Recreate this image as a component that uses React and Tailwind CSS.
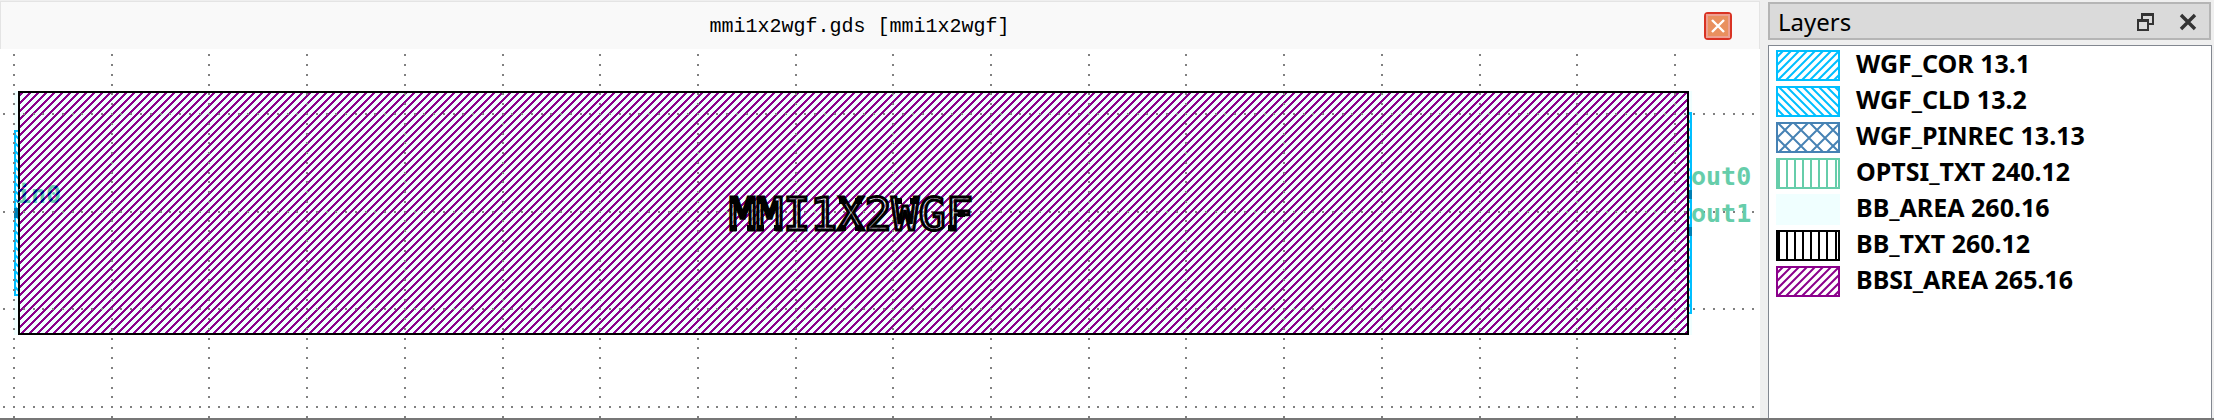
const PITCH = 97.7;
const X0 = 14;
const Y0 = 114;

const gridDots = [];
for (let i = 0; i < 18; i++) {
  for (let k = -6; k < 32; k++) {
    const y = Math.round(Y0 + (k * PITCH) / 10);
    if (y > 54 && y < 420) gridDots.push([Math.round(X0 + i * PITCH), y]);
  }
}
for (let j = 0; j < 4; j++) {
  for (let k = -1; k < 179; k++) {
    if (k % 10 !== 0) gridDots.push([Math.round(X0 + (k * PITCH) / 10), Math.round(Y0 + j * PITCH)]);
  }
}
const dotPath = gridDots.map(([x, y]) => `M${x - 1} ${y - 1}h2v2h-2z`).join("");

// One 3px run per pixel row, stepping left by one pixel each row.
const hatchRuns = Array.from({ length: 8 }, (_, row) => {
  const start = (9 - row) % 8;
  return `M${start} ${row}h3v1h-3zM${start - 8} ${row}h3v1h-3z`;
}).join("");

const layers = [
  { name: "WGF_COR 13.1", color: "#00bfff", fill: "rise" },
  { name: "WGF_CLD 13.2", color: "#00bfff", fill: "fall" },
  { name: "WGF_PINREC 13.13", color: "#4682b4", fill: "cross" },
  { name: "OPTSI_TXT 240.12", color: "#66cdaa", fill: "bars" },
  { name: "BB_AREA 260.16", color: "#f0ffff", fill: "solid" },
  { name: "BB_TXT 260.12", color: "#000000", fill: "bars" },
  { name: "BBSI_AREA 265.16", color: "#8b008b", fill: "rise" },
];

const hatch = {
  rise: "M-30 30L0 0M-22 30L8 0M-14 30L16 0M-6 30L24 0M2 30L32 0M10 30L40 0M18 30L48 0M26 30L56 0M34 30L64 0M42 30L72 0M50 30L80 0M58 30L88 0",
  fall: "M-30 0L0 30M-22 0L8 30M-14 0L16 30M-6 0L24 30M2 0L32 30M10 0L40 30M18 0L48 30M26 0L56 30M34 0L64 30M42 0L72 30M50 0L80 30M58 0L88 30",
  cross: "M-15 32L17 0M1 32L33 0M17 32L49 0M33 32L65 0M49 32L81 0M-31 0L1 32M-15 0L17 32M1 0L33 32M17 0L49 32M33 0L65 32M49 0L81 32",
  bars: "M3 0V31M11 0V31M19 0V31M27 0V31M35 0V31M43 0V31M51 0V31M60 0V31",
};

function Swatch({ color, fill }) {
  return (
    <svg viewBox="0 0 64 31" className="h-[31px] w-16 shrink-0 overflow-hidden" aria-hidden="true">
      {fill === "solid" ? (
        <rect width="64" height="31" fill={color} />
      ) : (
        <>
          <rect x="1" y="1" width="62" height="29" fill="#fff" stroke={color} strokeWidth="2" />
          <path d={hatch[fill]} stroke={color} strokeWidth="2" shapeRendering={fill === "bars" ? "crispEdges" : "auto"} />
        </>
      )}
    </svg>
  );
}

const serifs = [
  [730, 198], [747, 198], [730, 225], [747, 225],
  [757, 198], [774, 225], [757, 225],
  [839, 198], [855, 198], [839, 225], [855, 225],
  [895, 198], [910, 198],
  [948, 225], [958, 211],
];

function LayoutCanvas() {
  return (
    <svg viewBox="0 49 1760 369" preserveAspectRatio="xMinYMin slice" className="block h-[369px] w-full bg-white" role="img" aria-label="mmi1x2wgf layout">
      <defs>
        <pattern id="area" width="8" height="8" patternUnits="userSpaceOnUse">
          <path d={hatchRuns} fill="#8b008b" shapeRendering="crispEdges" />
        </pattern>
        <pattern id="label" width="8" height="8" patternUnits="userSpaceOnUse">
          <rect width="8" height="8" fill="#66cdaa" />
          <path d={hatchRuns} fill="#00008b" shapeRendering="crispEdges" />
        </pattern>
        <pattern id="guide" width="8" height="8" patternUnits="userSpaceOnUse">
          <path d="M-2 -2L10 10M-2 6L2 10M6 -2L10 2" stroke="#00bfff" strokeWidth="2" />
        </pattern>
      </defs>
      <rect x="14" y="91" width="1678" height="244" fill="#f0ffff" />
      <rect x="15" y="131" width="8" height="164" fill="url(#guide)" stroke="#00bfff" strokeWidth="2" />
      <rect x="1684" y="113" width="7" height="200" fill="url(#guide)" stroke="#00bfff" strokeWidth="2" />
      <path d="M14 208h6v10h-6zM1688 190h4v9h-4zM1688 227h4v9h-4z" fill="#0080b4" />
      <rect x="19" y="92" width="1669" height="242" fill="#f0ffff" />
      <rect x="19" y="92" width="1669" height="242" fill="url(#area)" stroke="#000" strokeWidth="2" />
      <path d={dotPath} fill="#808080" />
      <text x="16" y="203" fill="url(#label)" className="font-['DejaVu_Sans_Mono',monospace] text-[25px] font-bold">in0</text>
      <text x="1691" y="185" fill="#66cdaa" className="font-['DejaVu_Sans_Mono',monospace] text-[25px] font-bold">out0</text>
      <text x="1691" y="222" fill="#66cdaa" className="font-['DejaVu_Sans_Mono',monospace] text-[25px] font-bold">out1</text>
      <text x="729" y="230" fill="#f0ffff" fillOpacity="0.5" stroke="#000" strokeWidth="3" className="font-['DejaVu_Sans_Mono',monospace] text-[45px]">MMI1X2WGF</text>
      <path d={serifs.map(([x, y]) => `M${x} ${y}h7v6h-7z`).join("")} fill="#000" />
    </svg>
  );
}

export default function App() {
  return (
    <div className="flex min-h-screen flex-col border-b-2 border-[#777777] bg-[#efefef] text-black">
      <div className="flex flex-1">
        <main className="flex min-w-0 flex-1 flex-col">
          <header className="mt-px flex h-12 items-center border border-b-0 border-[#e4e4e4] bg-[#f9f9f9] pr-[27px]">
            <h1 className="flex-1 pl-[14px] pt-[3px] text-center font-['Liberation_Mono',monospace] text-xl">mmi1x2wgf.gds [mmi1x2wgf]</h1>
            <button aria-label="Close view" className="flex h-7 w-7 items-center justify-center rounded border-2 border-[#d93324] bg-[#e9905f]">
              <svg viewBox="0 0 24 24" className="h-6 w-6 shrink-0" fill="none">
                <rect x="1" y="1" width="22" height="22" stroke="#eda091" strokeWidth="2" />
                <path d="M6 6L18 18M18 6L6 18" stroke="#fff" strokeWidth="2.4" />
              </svg>
            </button>
          </header>
          <LayoutCanvas />
        </main>
        <aside className="ml-2 flex w-[446px] shrink-0 flex-col pr-[2px] pt-[2px]">
          <header className="mr-px flex h-[38px] items-center border-2 border-[#b5b5b5] bg-[#dadada] pl-2 pr-3 pt-[2px] font-['Noto_Sans',sans-serif]">
            <h2 className="flex-1 text-2xl">Layers</h2>
            <button aria-label="Float panel" className="mr-[25px]">
              <svg viewBox="0 0 17 18" className="h-[18px] w-[17px]" fill="none" stroke="#333" strokeWidth="2">
                <path d="M5 6V1H16V11H12M4 2H17" />
                <path d="M1 7H11V17H1ZM0 8H12" />
              </svg>
            </button>
            <button aria-label="Close panel">
              <svg viewBox="0 0 18 18" className="h-[18px] w-[18px]" fill="none">
                <path d="M2 2L16 16M16 2L2 16" stroke="#333" strokeWidth="3.4" />
              </svg>
            </button>
          </header>
          <ul className="mt-[5px] flex flex-1 flex-col gap-[5px] border border-b-0 border-[#828790] bg-white py-1 pl-[7px] font-['Noto_Sans',sans-serif] text-[25px] font-bold">
            {layers.map((layer) => (
              <li key={layer.name} className="flex h-[31px] items-start gap-4">
                <Swatch color={layer.color} fill={layer.fill} />
                <span className="whitespace-nowrap leading-[27px]">{layer.name}</span>
              </li>
            ))}
          </ul>
        </aside>
      </div>
    </div>
  );
}
